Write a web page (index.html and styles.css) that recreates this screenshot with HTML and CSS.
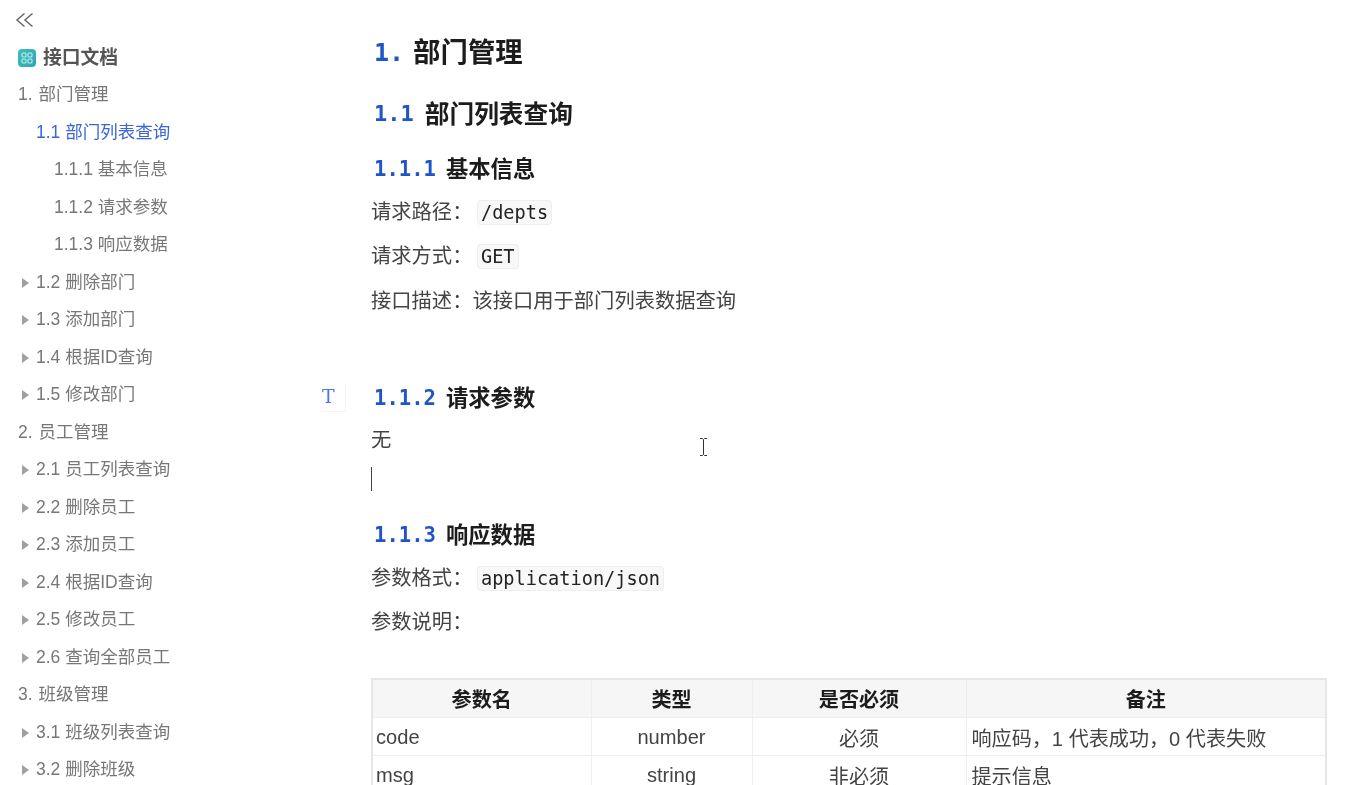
FILE: index.html
```html
<!DOCTYPE html>
<html lang="zh">
<head>
<meta charset="utf-8">
<title>接口文档</title>
<link rel="stylesheet" href="styles.css">
</head>
<body>
<div class="app">
  <aside class="sidebar">
    <button class="collapse" aria-label="collapse">
      <svg width="20" height="18" viewBox="0 0 20 18" fill="none" stroke="#666" stroke-width="1.5"><path d="M9.5 2.500 2 9l7.500 6.500M17.500 2.500 10 9l7.500 6.500"/></svg>
    </button>
    <div class="doc-title">
      <span class="doc-icon"><svg width="12" height="12" viewBox="0 0 12 12" fill="none" stroke="#bfeeee" stroke-width="1.1"><rect x="1" y="1" width="4" height="4" rx="1"/><rect x="7" y="1" width="4" height="4" rx="1"/><rect x="1" y="7" width="4" height="4" rx="1"/><rect x="7" y="7" width="4" height="4" rx="1"/></svg></span>
      接口文档
    </div>
    <nav class="toc">
      <div class="toc-row l1">1. 部门管理</div>
      <div class="toc-row l2 active">1.1 部门列表查询</div>
      <div class="toc-row l3">1.1.1 基本信息</div>
      <div class="toc-row l3">1.1.2 请求参数</div>
      <div class="toc-row l3">1.1.3 响应数据</div>
      <div class="toc-row l2 arrow">1.2 删除部门</div>
      <div class="toc-row l2 arrow">1.3 添加部门</div>
      <div class="toc-row l2 arrow">1.4 根据ID查询</div>
      <div class="toc-row l2 arrow">1.5 修改部门</div>
      <div class="toc-row l1">2. 员工管理</div>
      <div class="toc-row l2 arrow">2.1 员工列表查询</div>
      <div class="toc-row l2 arrow">2.2 删除员工</div>
      <div class="toc-row l2 arrow">2.3 添加员工</div>
      <div class="toc-row l2 arrow">2.4 根据ID查询</div>
      <div class="toc-row l2 arrow">2.5 修改员工</div>
      <div class="toc-row l2 arrow">2.6 查询全部员工</div>
      <div class="toc-row l1">3. 班级管理</div>
      <div class="toc-row l2 arrow">3.1 班级列表查询</div>
      <div class="toc-row l2 arrow">3.2 删除班级</div>
    </nav>
  </aside>
  <main class="doc">
    <h1><span class="num">1.</span>部门管理</h1>
    <h2><span class="num">1.1</span>部门列表查询</h2>
    <h3><span class="num">1.1.1</span>基本信息</h3>
    <p>请求路径： <code>/depts</code></p>
    <p>请求方式： <code>GET</code></p>
    <p>接口描述：该接口用于部门列表数据查询</p>
    <h3 class="gap"><span class="t-btn">T</span><span class="num">1.1.2</span>请求参数</h3>
    <p>无</p>
    <p class="caret-line"><span class="caret"></span></p>
    <h3 class="gap-s"><span class="num">1.1.3</span>响应数据</h3>
    <p>参数格式： <code>application/json</code></p>
    <p>参数说明：</p>
    <table>
      <colgroup><col class="c1"><col class="c2"><col class="c3"><col class="c4"></colgroup>
      <thead><tr><th>参数名</th><th>类型</th><th>是否必须</th><th>备注</th></tr></thead>
      <tbody>
        <tr><td>code</td><td class="mid">number</td><td class="mid">必须</td><td>响应码，1 代表成功，0 代表失败</td></tr>
        <tr><td>msg</td><td class="mid">string</td><td class="mid">非必须</td><td>提示信息</td></tr>
      </tbody>
    </table>
    <svg class="ibeam" width="9" height="18" viewBox="0 0 9 18" fill="none" stroke="#333" stroke-width="1"><path d="M1 .5h2.500l1 1 1-1H8M4.500 1.500v15M1 17.500h2.500l1-1 1 1H8"/></svg>
  </main>
</div>
</body>
</html>
```
FILE: styles.css
```css
* { box-sizing: border-box; }
html, body { margin: 0; height: 785px; overflow: hidden; background: #fff; }
body { font-family: "Open Sans", "Noto Sans CJK SC", sans-serif; color: #333; }
.app { display: flex; height: 785px; overflow: hidden; filter: blur(0.35px); }

.sidebar { width: 371px; flex: none; padding: 10px 0 0 18px; color: #777; }
.collapse { display: block; margin: 0 0 0 -3px; padding: 0; border: 0; background: none; height: 20px; line-height: 0; }
.doc-title { display: flex; align-items: center; gap: 7px; height: 37px; margin-top: 9px; font-size: 18.800px; font-weight: 700; color: #555; line-height: 37px; }
.doc-icon { width: 18px; height: 18px; border-radius: 4px; background: linear-gradient(135deg, #3cc0b8, #2ea6b8); display: flex; align-items: center; justify-content: center; }
.toc { display: flex; flex-direction: column; }
.toc-row { height: 37.500px; line-height: 37.500px; font-size: 17.500px; white-space: nowrap; font-family: "Liberation Sans", "Noto Sans CJK SC", sans-serif; }
.l1 { word-spacing: 1px; }
.l2 { padding-left: 18px; }
.l3 { padding-left: 36px; }
.active { color: #3a66d8; }
.arrow { position: relative; }
.arrow::before { content: ""; position: absolute; left: 4px; top: 14px; border-left: 7px solid #a0a0a0; border-top: 5px solid transparent; border-bottom: 5px solid transparent; }

.doc { flex: 1; min-width: 0; padding: 31px 21px 0 0; position: relative; }
h1, h2, h3 { margin: 0; color: #1c1c1c; font-weight: 700; font-family: "Noto Sans CJK SC", sans-serif; padding-left: 3px; display: flex; align-items: center; }
h1 { font-size: 27.400px; height: 38px; }
h2 { font-size: 24.700px; height: 34px; margin-top: 25.500px; }
h3 { font-size: 22.300px; height: 30px; margin-top: 23.500px; position: relative; }
h3.gap { margin-top: 67px; }
h3.gap-s { margin-top: 24px; }
.num { font-family: "DejaVu Sans Mono", monospace; color: #1f55c9; margin-right: 10px; font-weight: 700; padding-top: 4px; }
h1 .num { font-size: 25px; margin-right: 9px; }
h2 .num { font-size: 22px; margin-right: 11px; }
h3 .num { font-size: 20.600px; }
p { margin: 14.500px 0 0; font-size: 20.300px; line-height: 30px; height: 30px; color: #444; font-family: "Noto Sans CJK SC", sans-serif; }
h3 + p { margin-top: 12.500px; }
code { font-family: "DejaVu Sans Mono", monospace; font-size: 18.600px; background: #f8f8f8; border: 1px solid #eeeeee; border-radius: 4px; padding: 1px 3px; color: #222; }
.caret-line { margin-top: 11px; display: flex; align-items: center; }
.caret { display: block; width: 1px; height: 24px; background: #444; }

table { border-collapse: collapse; table-layout: fixed; width: 954px; margin-top: 43px; border: 2px solid #e6e6e6; font-size: 20.100px; font-family: "Liberation Sans", "Noto Sans CJK SC", sans-serif; color: #444; }
.c1 { width: 219px; } .c2 { width: 161px; } .c3 { width: 214px; } .c4 { width: 360px; }
th, td { height: 38px; padding: 0 5px; border: 1px solid #eeeeee; font-weight: 400; white-space: nowrap; text-align: left; }
td { padding-top: 3px; }
td:first-child { padding-left: 3px; }
th { background: #f6f6f6; text-align: center; font-weight: 700; color: #1c1c1c; font-family: "Noto Sans CJK SC", sans-serif; }
td.mid { text-align: center; }

.t-btn { position: absolute; left: -50px; top: 3px; width: 25px; height: 28px; padding-left: 1px; font-family: "DejaVu Serif", serif; font-weight: 400; font-size: 19px; line-height: 25px; color: #4a7bdc; border-right: 1px solid #f4f4f4; border-bottom: 1px solid #f4f4f4; }
.ibeam { position: absolute; left: 328px; top: 438px; }
```
